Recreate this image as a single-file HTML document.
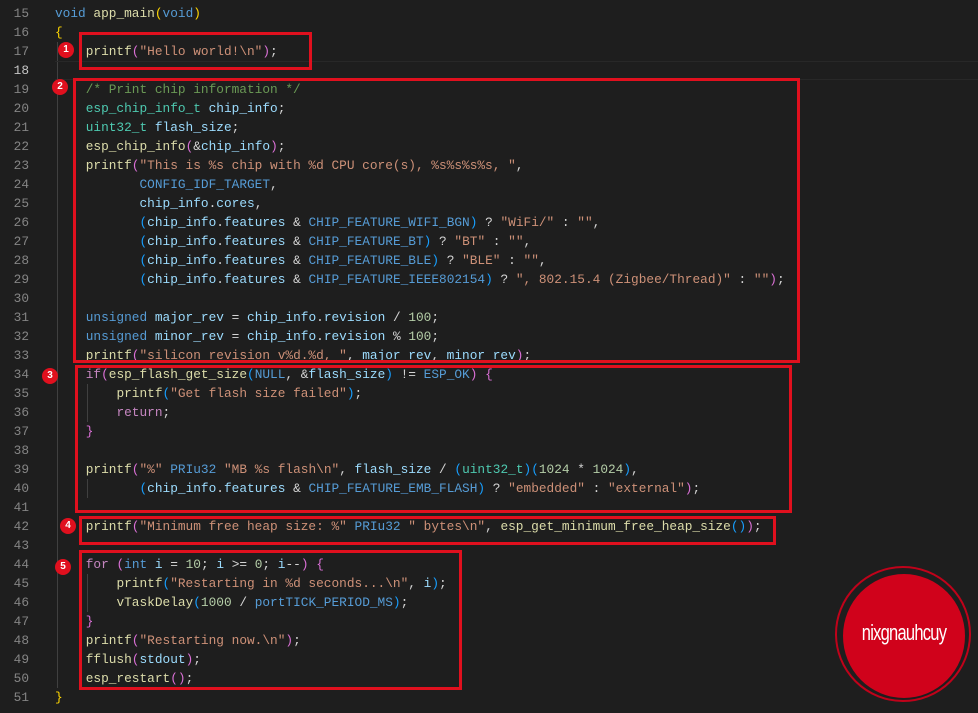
<!DOCTYPE html>
<html><head><meta charset="utf-8"><style>
body{margin:0;background:#1e1e1e;width:978px;height:713px;overflow:hidden;position:relative;font-family:"Liberation Mono",monospace;font-size:12.8px;}
.ln{position:absolute;left:0;width:29px;text-align:right;color:#858585;}
.code{position:absolute;left:55px;color:#d4d4d4;}
.row{height:19px;line-height:19px;white-space:pre;}
.k{color:#569cd6}.f{color:#dcdcaa}.s{color:#ce9178}.v{color:#9cdcfe}.c{color:#6a9955}.n{color:#b5cea8}.p{color:#c586c0}.t{color:#4ec9b0}.m{color:#569cd6}
.b1{color:#ffd700}.b2{color:#da70d6}.b3{color:#179fff}
.box{position:absolute;border:3px solid #e0101e;box-sizing:border-box;}
.dot{position:absolute;width:16px;height:16px;border-radius:50%;background:#e0101e;color:#fff;font:bold 10px "Liberation Sans",sans-serif;text-align:center;line-height:16px;}
.guide{position:absolute;width:1px;background:#404040;}
</style></head><body>
<div class="guide" style="left:57px;top:42px;height:646px"></div>
<div class="guide" style="left:87px;top:384px;height:38px"></div>
<div class="guide" style="left:87px;top:479px;height:19px"></div>
<div class="guide" style="left:87px;top:574px;height:38px"></div>
<div style="position:absolute;left:55px;top:61px;width:923px;height:19px;border-top:1px solid #282828;border-bottom:1px solid #282828;box-sizing:border-box"></div>
<div class="ln" style="top:4px">
<div class="row">15</div><div class="row">16</div><div class="row">17</div><div class="row" style="color:#c6c6c6">18</div><div class="row">19</div><div class="row">20</div><div class="row">21</div><div class="row">22</div><div class="row">23</div><div class="row">24</div><div class="row">25</div><div class="row">26</div><div class="row">27</div><div class="row">28</div><div class="row">29</div><div class="row">30</div><div class="row">31</div><div class="row">32</div><div class="row">33</div><div class="row">34</div><div class="row">35</div><div class="row">36</div><div class="row">37</div><div class="row">38</div><div class="row">39</div><div class="row">40</div><div class="row">41</div><div class="row">42</div><div class="row">43</div><div class="row">44</div><div class="row">45</div><div class="row">46</div><div class="row">47</div><div class="row">48</div><div class="row">49</div><div class="row">50</div><div class="row">51</div>
</div>
<div class="code" style="top:4px">
<div class="row"><span class="k">void</span> <span class="f">app_main</span><span class="b1">(</span><span class="k">void</span><span class="b1">)</span></div>
<div class="row"><span class="b1">{</span></div>
<div class="row">    <span class="f">printf</span><span class="b2">(</span><span class="s">"Hello world!\n"</span><span class="b2">)</span>;</div>
<div class="row"> </div>
<div class="row">    <span class="c">/* Print chip information */</span></div>
<div class="row">    <span class="t">esp_chip_info_t</span> <span class="v">chip_info</span>;</div>
<div class="row">    <span class="t">uint32_t</span> <span class="v">flash_size</span>;</div>
<div class="row">    <span class="f">esp_chip_info</span><span class="b2">(</span>&amp;<span class="v">chip_info</span><span class="b2">)</span>;</div>
<div class="row">    <span class="f">printf</span><span class="b2">(</span><span class="s">"This is %s chip with %d CPU core(s), %s%s%s%s, "</span>,</div>
<div class="row">           <span class="m">CONFIG_IDF_TARGET</span>,</div>
<div class="row">           <span class="v">chip_info</span>.<span class="v">cores</span>,</div>
<div class="row">           <span class="b3">(</span><span class="v">chip_info</span>.<span class="v">features</span> &amp; <span class="m">CHIP_FEATURE_WIFI_BGN</span><span class="b3">)</span> ? <span class="s">"WiFi/"</span> : <span class="s">""</span>,</div>
<div class="row">           <span class="b3">(</span><span class="v">chip_info</span>.<span class="v">features</span> &amp; <span class="m">CHIP_FEATURE_BT</span><span class="b3">)</span> ? <span class="s">"BT"</span> : <span class="s">""</span>,</div>
<div class="row">           <span class="b3">(</span><span class="v">chip_info</span>.<span class="v">features</span> &amp; <span class="m">CHIP_FEATURE_BLE</span><span class="b3">)</span> ? <span class="s">"BLE"</span> : <span class="s">""</span>,</div>
<div class="row">           <span class="b3">(</span><span class="v">chip_info</span>.<span class="v">features</span> &amp; <span class="m">CHIP_FEATURE_IEEE802154</span><span class="b3">)</span> ? <span class="s">", 802.15.4 (Zigbee/Thread)"</span> : <span class="s">""</span><span class="b2">)</span>;</div>
<div class="row"> </div>
<div class="row">    <span class="k">unsigned</span> <span class="v">major_rev</span> = <span class="v">chip_info</span>.<span class="v">revision</span> / <span class="n">100</span>;</div>
<div class="row">    <span class="k">unsigned</span> <span class="v">minor_rev</span> = <span class="v">chip_info</span>.<span class="v">revision</span> % <span class="n">100</span>;</div>
<div class="row">    <span class="f">printf</span><span class="b2">(</span><span class="s">"silicon revision v%d.%d, "</span>, <span class="v">major_rev</span>, <span class="v">minor_rev</span><span class="b2">)</span>;</div>
<div class="row">    <span class="p">if</span><span class="b2">(</span><span class="f">esp_flash_get_size</span><span class="b3">(</span><span class="m">NULL</span>, &amp;<span class="v">flash_size</span><span class="b3">)</span> != <span class="m">ESP_OK</span><span class="b2">)</span> <span class="b2">{</span></div>
<div class="row">        <span class="f">printf</span><span class="b3">(</span><span class="s">"Get flash size failed"</span><span class="b3">)</span>;</div>
<div class="row">        <span class="p">return</span>;</div>
<div class="row">    <span class="b2">}</span></div>
<div class="row"> </div>
<div class="row">    <span class="f">printf</span><span class="b2">(</span><span class="s">"%"</span> <span class="m">PRIu32</span> <span class="s">"MB %s flash\n"</span>, <span class="v">flash_size</span> / <span class="b3">(</span><span class="t">uint32_t</span><span class="b3">)(</span><span class="n">1024</span> * <span class="n">1024</span><span class="b3">)</span>,</div>
<div class="row">           <span class="b3">(</span><span class="v">chip_info</span>.<span class="v">features</span> &amp; <span class="m">CHIP_FEATURE_EMB_FLASH</span><span class="b3">)</span> ? <span class="s">"embedded"</span> : <span class="s">"external"</span><span class="b2">)</span>;</div>
<div class="row"> </div>
<div class="row">    <span class="f">printf</span><span class="b2">(</span><span class="s">"Minimum free heap size: %"</span> <span class="m">PRIu32</span> <span class="s">" bytes\n"</span>, <span class="f">esp_get_minimum_free_heap_size</span><span class="b3">()</span><span class="b2">)</span>;</div>
<div class="row"> </div>
<div class="row">    <span class="p">for</span> <span class="b2">(</span><span class="k">int</span> <span class="v">i</span> = <span class="n">10</span>; <span class="v">i</span> &gt;= <span class="n">0</span>; <span class="v">i</span>--<span class="b2">)</span> <span class="b2">{</span></div>
<div class="row">        <span class="f">printf</span><span class="b3">(</span><span class="s">"Restarting in %d seconds...\n"</span>, <span class="v">i</span><span class="b3">)</span>;</div>
<div class="row">        <span class="f">vTaskDelay</span><span class="b3">(</span><span class="n">1000</span> / <span class="m">portTICK_PERIOD_MS</span><span class="b3">)</span>;</div>
<div class="row">    <span class="b2">}</span></div>
<div class="row">    <span class="f">printf</span><span class="b2">(</span><span class="s">"Restarting now.\n"</span><span class="b2">)</span>;</div>
<div class="row">    <span class="f">fflush</span><span class="b2">(</span><span class="v">stdout</span><span class="b2">)</span>;</div>
<div class="row">    <span class="f">esp_restart</span><span class="b2">()</span>;</div>
<div class="row"><span class="b1">}</span></div>
</div>
<div class="box" style="left:79px;top:32px;width:233px;height:38px"></div>
<div class="box" style="left:73px;top:78px;width:727px;height:285px"></div>
<div class="box" style="left:75px;top:365px;width:717px;height:148px"></div>
<div class="box" style="left:79px;top:516px;width:697px;height:29px"></div>
<div class="box" style="left:79px;top:550px;width:383px;height:140px"></div>
<div class="dot" style="left:58px;top:42px">1</div>
<div class="dot" style="left:52px;top:79px">2</div>
<div class="dot" style="left:42px;top:368px">3</div>
<div class="dot" style="left:60px;top:518px">4</div>
<div class="dot" style="left:55px;top:559px">5</div>
<div style="position:absolute;left:843px;top:574px;width:122px;height:124px;border-radius:50%;background:#d0021b"></div>
<div style="position:absolute;left:835px;top:566px;width:136px;height:136px;border-radius:50%;border:2px solid #c0021a;box-sizing:border-box"></div>
<div style="position:absolute;left:845px;top:620px;width:118px;text-align:center;color:#fff;font:22px 'Liberation Sans Narrow','Liberation Sans',sans-serif;transform:scaleX(0.75);letter-spacing:-1px">nixgnauhcuy</div>
</body></html>
